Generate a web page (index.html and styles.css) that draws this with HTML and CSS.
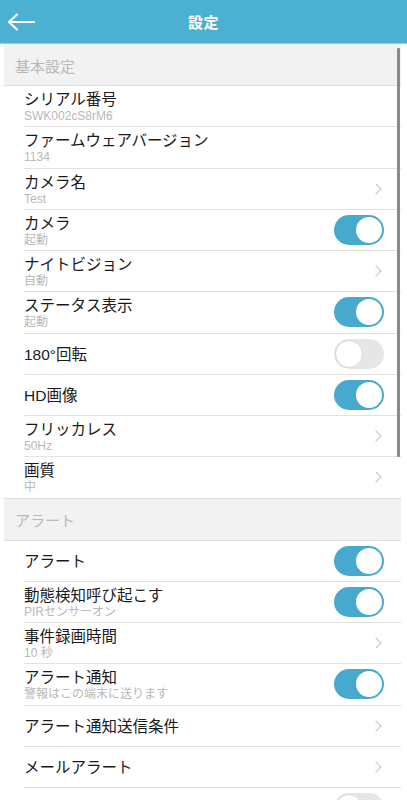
FILE: index.html
```html
<!DOCTYPE html>
<html lang="ja">
<head>
    <meta charset="UTF-8">
    <meta name="viewport" content="width=device-width, initial-scale=1.0">
    <title>設定</title>
    <link rel="stylesheet" href="styles.css">
</head>
<body>
    <header class="topbar">
        <button class="back" aria-label="戻る">
            <svg width="28" height="18" viewBox="0 0 28 18"><path d="M27 9H2M10 1.5L2 9l8 7.5" fill="none" stroke="#fff" stroke-width="2.2" stroke-linecap="round" stroke-linejoin="round"/></svg>
        </button>
        <h1>設定</h1>
    </header>

    <main class="list">
        <div class="scrollbar"></div>

        <div class="section">基本設定</div>
        <div class="row">
            <div class="text"><div class="title">シリアル番号</div><div class="sub">SWK002cS8rM6</div></div>
        </div>
        <div class="row">
            <div class="text"><div class="title">ファームウェアバージョン</div><div class="sub">1134</div></div>
        </div>
        <div class="row">
            <div class="text"><div class="title">カメラ名</div><div class="sub">Test</div></div>
            <span class="chevron"></span>
        </div>
        <div class="row">
            <div class="text"><div class="title">カメラ</div><div class="sub">起動</div></div>
            <span class="toggle on"></span>
        </div>
        <div class="row">
            <div class="text"><div class="title">ナイトビジョン</div><div class="sub">自動</div></div>
            <span class="chevron"></span>
        </div>
        <div class="row">
            <div class="text"><div class="title">ステータス表示</div><div class="sub">起動</div></div>
            <span class="toggle on"></span>
        </div>
        <div class="row">
            <div class="text"><div class="title">180°回転</div></div>
            <span class="toggle"></span>
        </div>
        <div class="row">
            <div class="text"><div class="title">HD画像</div></div>
            <span class="toggle on"></span>
        </div>
        <div class="row">
            <div class="text"><div class="title">フリッカレス</div><div class="sub">50Hz</div></div>
            <span class="chevron"></span>
        </div>
        <div class="row last">
            <div class="text"><div class="title">画質</div><div class="sub">中</div></div>
            <span class="chevron"></span>
        </div>

        <div class="section">アラート</div>
        <div class="row">
            <div class="text"><div class="title">アラート</div></div>
            <span class="toggle on"></span>
        </div>
        <div class="row">
            <div class="text"><div class="title">動態検知呼び起こす</div><div class="sub">PIRセンサーオン</div></div>
            <span class="toggle on"></span>
        </div>
        <div class="row">
            <div class="text"><div class="title">事件録画時間</div><div class="sub">10 秒</div></div>
            <span class="chevron"></span>
        </div>
        <div class="row">
            <div class="text"><div class="title">アラート通知</div><div class="sub">警報はこの端末に送ります</div></div>
            <span class="toggle on"></span>
        </div>
        <div class="row">
            <div class="text"><div class="title">アラート通知送信条件</div></div>
            <span class="chevron"></span>
        </div>
        <div class="row">
            <div class="text"><div class="title">メールアラート</div></div>
            <span class="chevron"></span>
        </div>
        <div class="row">
            <div class="text"><div class="title">&nbsp;</div></div>
            <span class="toggle"></span>
        </div>
    </main>
</body>
</html>
```

FILE: styles.css
```css
body {
    margin: 0;
    font-family: "Liberation Sans", "Noto Sans CJK JP", sans-serif;
    background-color: #FFFFFF;
    color: #1A1A1A;
    overflow: hidden;
}
.topbar {
    position: relative;
    height: 44px;
    background-color: #4CB0D3;
    border-bottom: 1px solid #8FD0E6;
    box-sizing: border-box;
    display: flex;
    align-items: center;
    justify-content: center;
}
.topbar h1 {
    margin: 0;
    font-size: 15px;
    font-weight: bold;
    color: #FFFFFF;
    letter-spacing: 0.5px;
}
.back {
    position: absolute;
    left: 7px;
    top: 13px;
    padding: 0;
    border: none;
    background: none;
    display: flex;
}
.list {
    position: relative;
    margin: 0 6px 0 4px;
}
.scrollbar {
    position: absolute;
    left: 393px;
    top: 4px;
    width: 3px;
    height: 409px;
    background-color: #8A8A8A;
    border-radius: 1px;
}
.section {
    height: 42px;
    box-sizing: border-box;
    padding-left: 11px;
    padding-top: 1px;
    display: flex;
    align-items: center;
    background-color: #F2F2F2;
    border-bottom: 1px solid #DDDDDD;
    color: #B8B8B8;
    font-size: 15px;
}
.row {
    height: 41.25px;
    box-sizing: border-box;
    margin-left: 20px;
    padding-right: 17px;
    border-bottom: 1px solid #E2E2E2;
    display: flex;
    align-items: center;
}
.row.last {
    margin-left: 0;
    padding-left: 20px;
    border-bottom-color: #DDDDDD;
}
.text {
    flex: 1;
    padding-top: 2px;
}
.title {
    font-size: 15.5px;
    line-height: 19px;
}
.sub {
    font-size: 12px;
    line-height: 15px;
    color: #B8B8B8;
}
.chevron {
    width: 7px;
    height: 7px;
    margin-right: 4px;
    border-top: 1.3px solid #C4C4C4;
    border-right: 1.3px solid #C4C4C4;
    transform: rotate(45deg);
}
.toggle {
    position: relative;
    width: 50px;
    height: 30px;
    box-sizing: border-box;
    border-radius: 15px;
    background-color: #E6E6E6;
}
.toggle::after {
    content: "";
    position: absolute;
    top: 1px;
    left: 1px;
    width: 28px;
    height: 28px;
    box-sizing: border-box;
    border-radius: 50%;
    background-color: #FFFFFF;
    border: 1px solid #D6D6D6;
}
.toggle.on {
    background-color: #48A9CE;
}
.toggle.on::after {
    left: 22px;
    top: 2px;
    width: 26px;
    height: 26px;
    border: none;
}
```
